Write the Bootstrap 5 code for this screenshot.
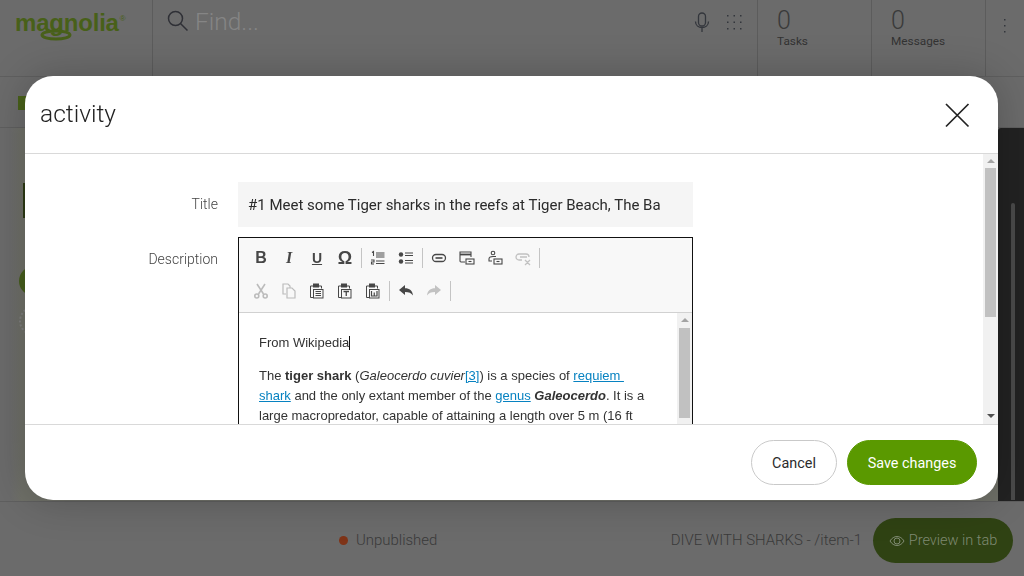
<!DOCTYPE html>
<html lang="en">
<head>
<meta charset="utf-8">
<title>activity</title>
<link href="https://cdn.jsdelivr.net/npm/bootstrap@5.3.0/dist/css/bootstrap.min.css" rel="stylesheet">
<style>
html,body{height:100%;overflow:hidden}
body{background:#6b6b6b;font-family:Roboto,"Liberation Sans",sans-serif;color:#333}
.app-shell{height:576px;width:1024px}
.top-strip{height:77px;border-bottom:1px solid #5f5f5f}
.cell-logo{width:153px;border-right:1px solid #5c5c5c;padding:9px 0 0 15px;position:relative;flex-shrink:0}
.logo-word{font:700 24px/28px "Liberation Sans",sans-serif;color:#486019;letter-spacing:-.2px}
.logo-word sup{font-size:8px;font-weight:400;top:-1.2em;margin-left:1px}
.logo-swirl{position:absolute;left:40px;top:29px}
.cell-search{width:605px;flex-shrink:0;border-right:1px solid #5c5c5c;padding:0 15px 0 14px;height:76px}
.find-text{font-size:24.500px;font-weight:300;color:#858585;line-height:36px;margin-left:6px}
.cell-count{width:114px;flex-shrink:0;border-right:1px solid #5c5c5c;padding:8px 0 0 19px}
.count-num{font-size:25px;font-weight:300;line-height:26px;color:#3a3a3a}
.count-label{font-size:11.800px;line-height:14px;color:#333}
.cell-more{flex:1;padding:13px 0 0 17px}
.second-strip{height:51px;border-bottom:1px solid #5f5f5f;padding:19px 0 0 18px}
.green-tab{width:14px;height:14px;background:#486019}
.middle-zone{flex:1;min-height:0}
.left-rail{flex:1;background:linear-gradient(90deg,#6b6b6b 10px,#6f7068 22px);padding-top:55px}
.rail-bar{width:30px;height:35px;background:#2c3a14;margin-left:23px}
.rail-dot{width:30px;height:30px;border-radius:50%;background:#465e1c;margin:48px 0 0 19px}
.rail-ring{width:30px;height:30px;border-radius:50%;border:2px dotted #7f7f7f;margin:10px 0 0 19px}
.dark-panel{width:26px;background:#222;border-radius:3px 0 0 0;padding:75px 0 0 13px}
.dark-thumb{width:4px;height:297px;background:#4a4a4a;border-radius:2px 2px 0 0}
.bottom-strip{height:75px;border-top:1px solid #5f5f5f;padding:2px 11px 0 339px;font-size:14.950px;color:#3a3a3a;font-weight:300}
.pub-dot{width:9px;height:9px;border-radius:50%;background:#7f3418;margin-right:8px}
.pill-preview{width:140px;height:45px;border-radius:23px;background:#2f4213;color:#7f8a72;font-size:14.500px;margin-left:11px;padding-top:1px}
.dlg-shell.modal-content{position:fixed;left:25px;top:76px;width:973px;height:424px;border-radius:28px;border:0;overflow:hidden;box-shadow:0 0 40px rgba(0,0,0,.22);background:#fff}
.dlg-shell .modal-header{height:78px;padding:0 28px 0 15px;border-bottom:1px solid #d9d9d9;flex-shrink:0}
.dlg-title{font-size:24.500px;font-weight:300;color:#222;line-height:1}
.x-btn{background:none;border:0;padding:0;line-height:0}
.dlg-scroll{flex:1;min-height:0;overflow:hidden;padding:0}
.form-pane{flex:1;min-width:0;padding-top:28px}
.form-label-cell{width:193px;text-align:right;font-size:14px;font-weight:300;color:#444;padding-right:0}
.title-box{width:455px;height:45px;margin-left:20px;background:#f5f5f5;padding:1px 10px 0;font-size:15px;color:#2b2b2b;white-space:nowrap;overflow:hidden}
.title-row{margin-bottom:10px}
.editor-box{width:455px;height:400px;margin-left:20px;border:1px solid #111;border-bottom:0}
.tool-area{background:#f8f8f8;border-bottom:1px solid #d1d1d1;height:75px;padding:6px 0 0 8px}
.tool-row{height:28px;margin-bottom:5px}
.tool-btn{width:28px;height:28px;color:#474747;font:700 16px/28px "Liberation Sans",sans-serif;text-align:center;flex-shrink:0}
.tool-btn.is-off{opacity:.3}
.tool-sep{width:1px;height:20px;background:#c4c4c4;margin:0 2px}
.editor-body{flex:1;min-height:0}
.editor-text{flex:1;padding:20px 28px 0 20px;font:13px/20px "Liberation Sans",Arial,sans-serif;color:#333}
.editor-text p{margin:0 0 13px}
.editor-text a{color:#0782c1}
.caret-mark{display:inline-block;width:1px;height:14px;background:#111;vertical-align:-3px}
.sb-track{width:15px;background:#f1f1f1;flex-shrink:0;padding:0 2px}
.sb-up,.sb-down{height:14px;position:relative}
.sb-up::after,.sb-down::after{content:"";position:absolute;left:2px;top:5px;border:4px solid transparent}
.sb-up::after{border-bottom-color:#a3a3a3;border-top:0}
.sb-down::after{border-top-color:#505050;border-bottom:0;top:4px}
.sb-thumb{background:#c1c1c1}
.sb-up.head-tall{height:15px}
.thumb-inner{height:90px}
.thumb-outer{height:149px}
.dlg-shell .modal-footer{height:76px;padding:0 21px 0 0;border-top:1px solid #d9d9d9;flex-shrink:0;gap:10px}
.dlg-shell .modal-footer>.btn{margin:0;height:45px;border-radius:23px;font-size:14.400px;padding:2px 0 0}
.btn-cancel{width:86px;background:#fff;border:1px solid #c9c9c9;color:#2b2b2b}
.btn-save{width:130px;background:#5a9900;border:1px solid #5a9900;color:#fff}
</style>
</head>
<body>
<div class="app-shell d-flex flex-column">
  <div class="top-strip d-flex">
    <div class="cell-logo">
      <div class="logo-word">magnolia<sup>®</sup></div>
      <svg class="logo-swirl" width="32" height="12" viewBox="0 0 32 12"><ellipse cx="16" cy="6" rx="14" ry="4" fill="none" stroke="#486019" stroke-width="3"/></svg>
    </div>
    <div class="cell-search d-flex align-items-start pt-1">
      <svg style="margin-top:6px" width="22" height="22" viewBox="0 0 22 22" fill="none" stroke="#2f3036" stroke-width="1.500"><circle cx="8.500" cy="8.500" r="7"/><path d="M13.500 13.500l7 7"/></svg>
      <span class="find-text">Find...</span>
      <svg class="ms-auto" style="margin-top:8px" width="16" height="22" viewBox="0 0 16 22" fill="none" stroke="#33363c" stroke-width="1.300"><rect x="4.500" y="1" width="7" height="13" rx="3.500"/><path d="M1.500 9.500c0 8 13 8 13 0M8 16v4"/></svg>
      <svg style="margin:11px 0 0 17px" width="15" height="16" viewBox="0 0 15 16" fill="#33363c"><rect x="0" y="0" width="1.500" height="1.500"/><rect x="6.500" y="0" width="1.500" height="1.500"/><rect x="13" y="0" width="1.500" height="1.500"/><rect x="0" y="6.500" width="1.500" height="1.500"/><rect x="6.500" y="6.500" width="1.500" height="1.500"/><rect x="13" y="6.500" width="1.500" height="1.500"/><rect x="0" y="13" width="1.500" height="1.500"/><rect x="6.500" y="13" width="1.500" height="1.500"/><rect x="13" y="13" width="1.500" height="1.500"/></svg>
    </div>
    <div class="cell-count"><div class="count-num">0</div><div class="count-label">Tasks</div></div>
    <div class="cell-count"><div class="count-num">0</div><div class="count-label">Messages</div></div>
    <div class="cell-more"><svg width="4" height="18" viewBox="0 0 4 18" fill="#33363c"><rect x="1" y="2" width="1.500" height="1.500"/><rect x="1" y="8" width="1.500" height="1.500"/><rect x="1" y="14" width="1.500" height="1.500"/></svg></div>
  </div>
  <div class="second-strip"><div class="green-tab"></div></div>
  <div class="middle-zone d-flex">
    <div class="left-rail"><div class="rail-bar"></div><div class="rail-dot"></div><div class="rail-ring"></div></div>
    <div class="dark-panel"><div class="dark-thumb"></div></div>
  </div>
  <div class="bottom-strip d-flex align-items-center">
    <span class="pub-dot"></span><span>Unpublished</span>
    <span class="ms-auto">DIVE WITH SHARKS - /item-1</span>
    <div class="pill-preview d-flex align-items-center justify-content-center gap-1">
      <svg width="16" height="12" viewBox="0 0 16 12" fill="none" stroke="#7f8a72" stroke-width="1"><path d="M1 6c3.500-6 10.500-6 14 0c-3.500 6-10.500 6-14 0z"/><circle cx="8" cy="6" r="3"/></svg>
      <span>Preview in tab</span>
    </div>
  </div>
</div>

<div class="modal-content dlg-shell d-flex flex-column" role="dialog" aria-label="activity">
  <div class="modal-header d-flex align-items-center justify-content-between">
    <h5 class="dlg-title m-0">activity</h5>
    <button class="x-btn" type="button" aria-label="Close"><svg width="26" height="26" viewBox="0 0 26 26" fill="none" stroke="#222" stroke-width="1.700"><path d="M2 2l22.500 22.500M24.500 2L2 24.500"/></svg></button>
  </div>
  <div class="modal-body dlg-scroll d-flex">
    <div class="form-pane">
      <div class="title-row d-flex align-items-center">
        <div class="form-label-cell" style="margin-top:-1px">Title</div>
        <div class="title-box d-flex align-items-center">#1 Meet some Tiger sharks in the reefs at Tiger Beach, The Ba</div>
      </div>
      <div class="d-flex align-items-start">
        <div class="form-label-cell" style="padding-top:12px">Description</div>
        <div class="editor-box d-flex flex-column">
          <div class="tool-area">
            <div class="tool-row d-flex align-items-center">
              <div class="tool-btn">B</div>
              <div class="tool-btn fst-italic" style="font-family:'Liberation Serif',serif">I</div>
              <div class="tool-btn text-decoration-underline" style="font-size:14px">U</div>
              <div class="tool-btn" style="font-size:18px">Ω</div>
              <div class="tool-sep"></div>
              <div class="tool-btn d-flex align-items-center justify-content-center"><svg width="16" height="16" viewBox="0 0 16 16" fill="none" stroke="#474747" stroke-width="1.100"><path d="M2 2.500l1.500-1v4.500M1 10h3v2H1.500v2H4M6 3h8.500M6 5h8.500M6 7h8.500M6 11h8.500M6 13.500h8.500"/></svg></div>
              <div class="tool-btn d-flex align-items-center justify-content-center"><svg width="16" height="16" viewBox="0 0 16 16"><circle cx="3" cy="4.500" r="2.200" fill="#474747"/><circle cx="3" cy="11.500" r="2.200" fill="#474747"/><path d="M7 3h8M7 5.500h8M7 10.500h8M7 13h8" stroke="#474747" stroke-width="1.100"/></svg></div>
              <div class="tool-sep"></div>
              <div class="tool-btn d-flex align-items-center justify-content-center"><svg width="16" height="16" viewBox="0 0 16 16" fill="none" stroke="#474747" stroke-width="1.300"><rect x="1.500" y="4.500" width="13" height="7" rx="3.500"/><path d="M4.500 8h7" stroke-width="1.600"/></svg></div>
              <div class="tool-btn d-flex align-items-center justify-content-center"><svg width="16" height="16" viewBox="0 0 16 16" fill="none" stroke="#474747" stroke-width="1.100"><path d="M6 12H2a1 1 0 0 1-1-1V2h11v5"/><path d="M1 4.500h11" stroke-width="1.800"/><rect x="7" y="9" width="8" height="5"/><path d="M9.500 11.500h3"/></svg></div>
              <div class="tool-btn d-flex align-items-center justify-content-center"><svg width="16" height="16" viewBox="0 0 16 16" fill="none" stroke="#474747" stroke-width="1.100"><circle cx="6" cy="3" r="1.800"/><path d="M2 9c0-2 2-2.500 4-2.500h3M2 9v2h3"/><rect x="7" y="9" width="8" height="5"/><path d="M9.500 11.500h3"/></svg></div>
              <div class="tool-btn is-off d-flex align-items-center justify-content-center"><svg width="16" height="16" viewBox="0 0 16 16" fill="none" stroke="#474747" stroke-width="1.300"><path d="M7 10H4a3 3 0 0 1 0-6h7a3 3 0 0 1 3 3M5 7h7M10 10l5 5M15 10l-5 5"/></svg></div>
              <div class="tool-sep"></div>
            </div>
            <div class="tool-row d-flex align-items-center">
              <div class="tool-btn is-off d-flex align-items-center justify-content-center"><svg width="16" height="16" viewBox="0 0 16 16" fill="none" stroke="#333" stroke-width="1.600"><path d="M4 1l6.500 10M12 1L5.500 11"/><circle cx="3.800" cy="13" r="2"/><circle cx="12.200" cy="13" r="2"/></svg></div>
              <div class="tool-btn is-off d-flex align-items-center justify-content-center"><svg width="16" height="16" viewBox="0 0 16 16" fill="none" stroke="#333" stroke-width="1.200"><path d="M5 11H2V1h5l2 2v2"/><path d="M6 5h5l3 3v7H6z"/></svg></div>
              <div class="tool-btn d-flex align-items-center justify-content-center"><svg width="16" height="16" viewBox="0 0 16 16" fill="none" stroke="#474747" stroke-width="1"><path d="M4 14.500H1.500V3H4M10 3h2.500v2.500"/><rect x="4.500" y="1" width="5" height="3" fill="#474747"/><rect x="4.500" y="6.500" width="9.500" height="8.500"/><path d="M6.500 8.500h5.500M6.500 10.500h5.500M6.500 12.500h5.500"/></svg></div>
              <div class="tool-btn d-flex align-items-center justify-content-center"><svg width="16" height="16" viewBox="0 0 16 16" fill="none" stroke="#474747" stroke-width="1"><path d="M4 14.500H1.500V3H4M10 3h2.500v2.500"/><rect x="4.500" y="1" width="5" height="3" fill="#474747"/><rect x="4.500" y="6.500" width="9.500" height="8.500"/><path d="M6.500 8.500h5.500M9.250 8.500v4.500" stroke-width="1.300"/></svg></div>
              <div class="tool-btn d-flex align-items-center justify-content-center"><svg width="16" height="16" viewBox="0 0 16 16" fill="none" stroke="#474747" stroke-width="1"><path d="M4 14.500H1.500V3H4M10 3h2.500v2.500"/><rect x="4.500" y="1" width="5" height="3" fill="#474747"/><rect x="4.500" y="6.500" width="9.500" height="8.500"/><path d="M6.500 8v5h5.500V8M9.250 13V9.500" stroke-width="1.200"/></svg></div>
              <div class="tool-sep"></div>
              <div class="tool-btn d-flex align-items-center justify-content-center"><svg width="16" height="16" viewBox="0 0 16 16" fill="#474747"><path d="M1 7l6-5v3.200c4.500 0 7.500 2.300 8 7.300-1.700-2.500-4-3.500-8-3.500V12z"/></svg></div>
              <div class="tool-btn is-off d-flex align-items-center justify-content-center"><svg width="16" height="16" viewBox="0 0 16 16" fill="#474747"><path d="M15 7L9 2v3.200c-4.500 0-7.500 2.300-8 7.300 1.700-2.500 4-3.500 8-3.500V12z"/></svg></div>
              <div class="tool-sep"></div>
            </div>
          </div>
          <div class="editor-body d-flex">
            <div class="editor-text">
              <p>From Wikipedia<span class="caret-mark"></span></p>
              <p>The <b>tiger shark</b> (<i>Galeocerdo cuvier</i><a href="#">[3]</a>) is a species of <a href="#">requiem&nbsp;<wbr>shark</a> and the only extant member of the <a href="#">genus</a> <b><i>Galeocerdo</i></b>. It is a large macropredator, capable of attaining a length over 5&nbsp;m (16&nbsp;ft 5&nbsp;in).</p>
            </div>
            <div class="sb-track"><div class="sb-up head-tall"></div><div class="sb-thumb thumb-inner"></div></div>
          </div>
        </div>
      </div>
    </div>
    <div class="sb-track d-flex flex-column"><div class="sb-up"></div><div class="sb-thumb thumb-outer"></div><div class="sb-down mt-auto"></div></div>
  </div>
  <div class="modal-footer d-flex align-items-center justify-content-end">
    <button class="btn btn-cancel" type="button">Cancel</button>
    <button class="btn btn-save" type="button">Save changes</button>
  </div>
</div>
<script src="https://cdn.jsdelivr.net/npm/bootstrap@5.3.0/dist/js/bootstrap.bundle.min.js"></script>
</body>
</html>
